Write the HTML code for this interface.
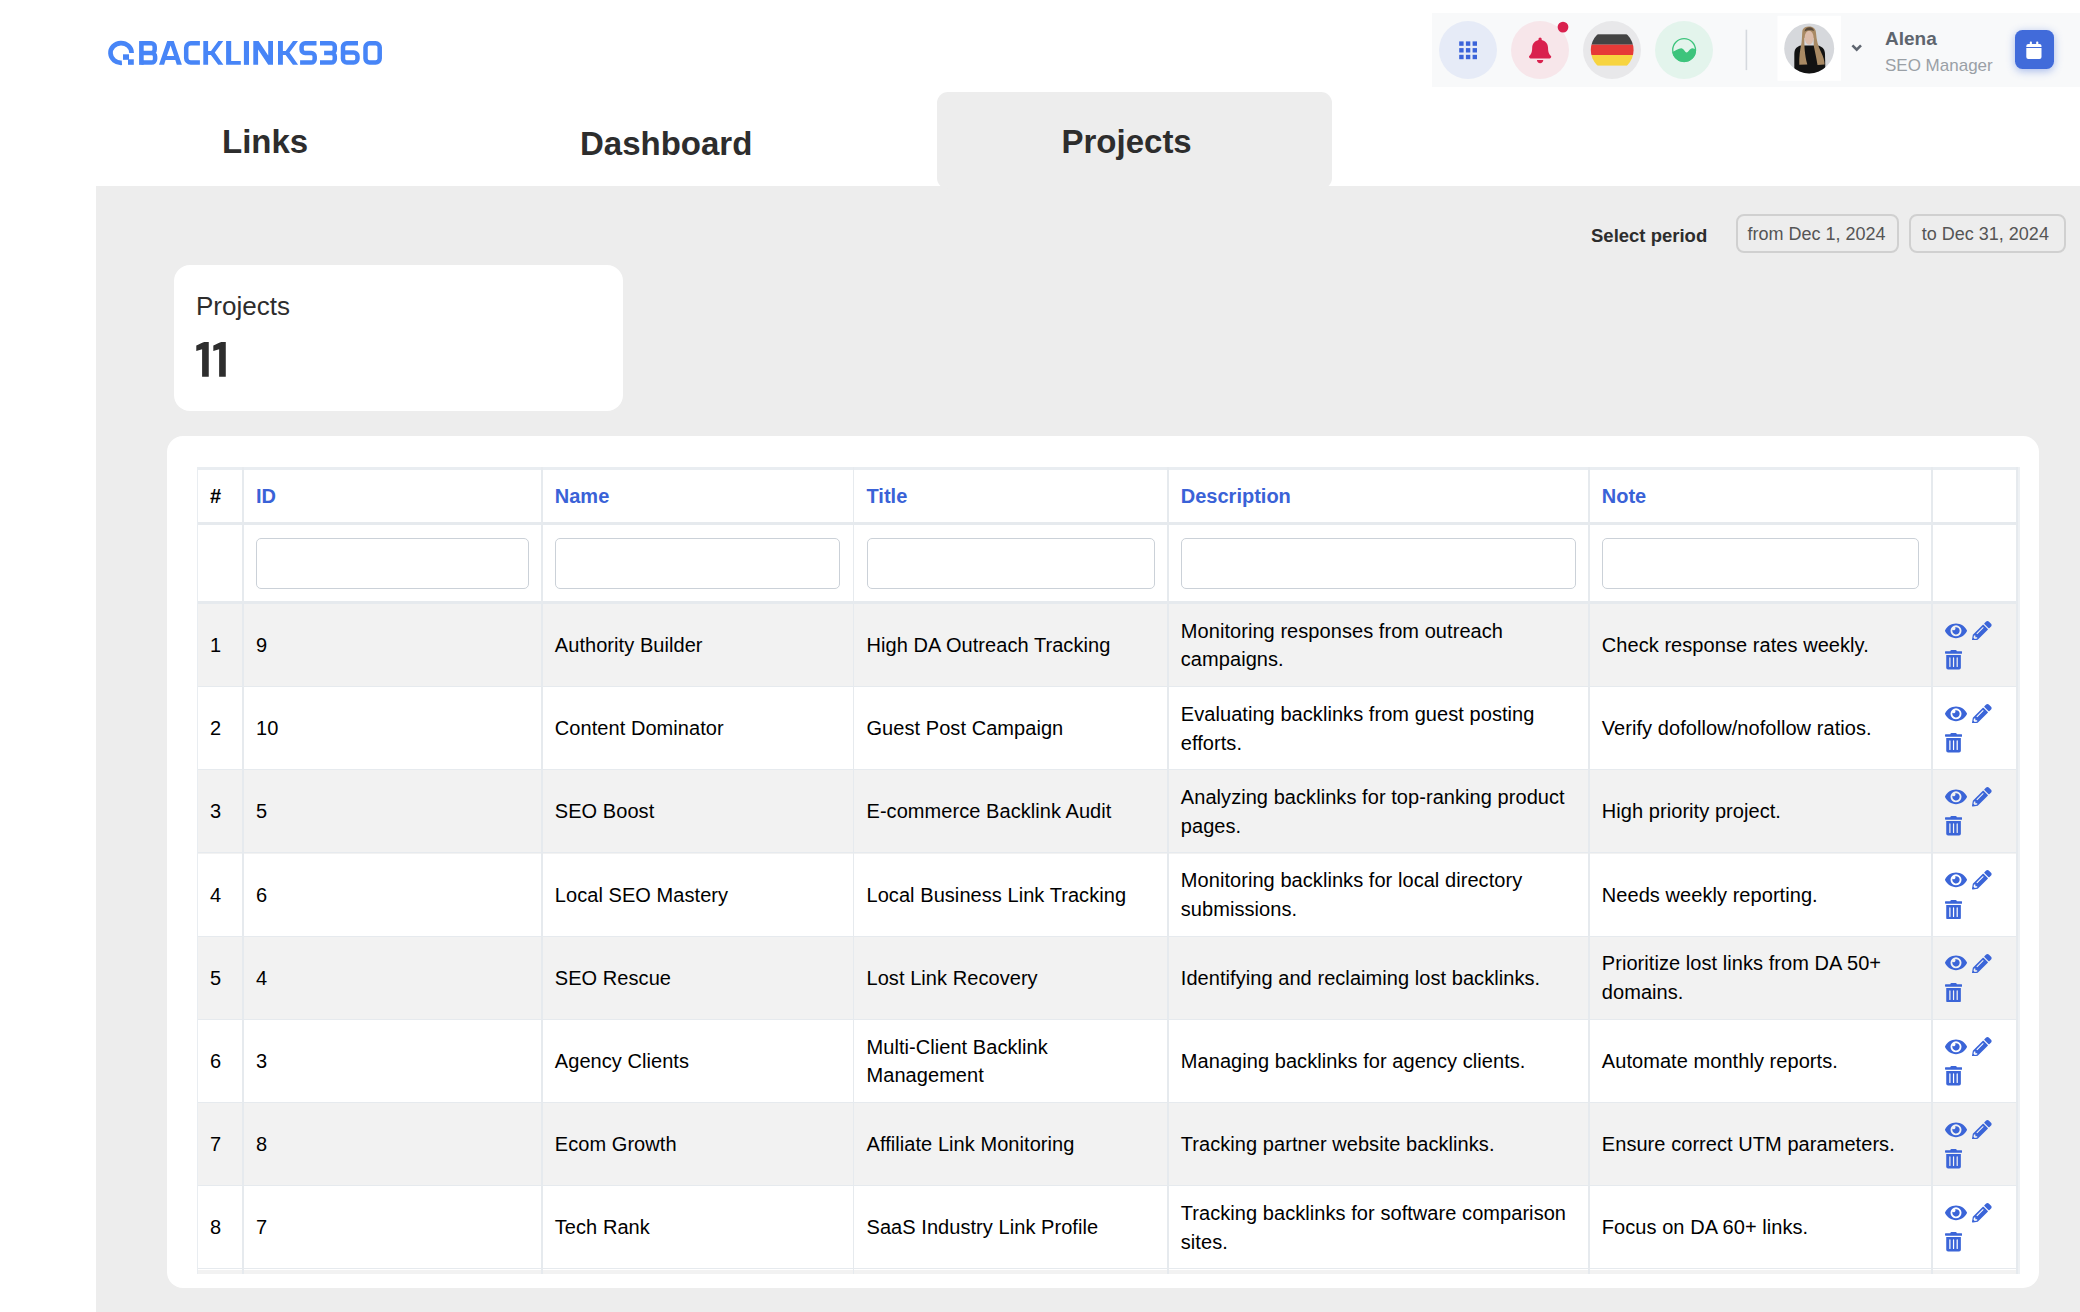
<!DOCTYPE html>
<html><head><meta charset="utf-8">
<style>
*{box-sizing:border-box;margin:0;padding:0}
html,body{width:2080px;height:1312px;overflow:hidden;background:#fff;font-family:"Liberation Sans",sans-serif;color:#000}
.abs{position:absolute}
.t{position:absolute;white-space:nowrap;line-height:1}
#toolbar{left:1432px;top:13px;width:648px;height:74px;background:#f8f9fa}
.circ{position:absolute;top:21px;width:58px;height:58px;border-radius:50%}
#panel{left:96px;top:186px;width:1984px;height:1126px;background:#ededed}
#tabp{left:937px;top:91.5px;width:395px;height:97.5px;background:#ededed;border-radius:11px}
.tab{font-weight:bold;font-size:33px;color:#2d2d2d}
.datebox{position:absolute;top:214px;height:39px;border:2px solid #d0d0d0;border-radius:8px}
.card{position:absolute;background:#fff;border-radius:16px}
</style></head><body>

<!-- logo -->
<svg class="abs" style="left:0;top:0" width="400" height="90" viewBox="0 0 400 90">
<g fill="none" stroke="#4785f7" stroke-width="4.5" stroke-linecap="butt" stroke-linejoin="miter">
<path stroke-width="4.7" d="M131.6,52.9 A10.55,9.85 0 1 0 121.9,62.75"/>
<path d="M199.9,43.3 H190.7 A4.5,4.5 0 0 0 186.2,47.8 V58.1 A4.5,4.5 0 0 0 190.7,62.6 H199.9"/>
<path d="M141.4,43.3 H151.2 A3.5,3.5 0 0 1 154.7,46.8 V49.5 A3.5,3.5 0 0 1 151.2,53 H141.4 M141.4,53 H151.6 A3.5,3.5 0 0 1 155.1,56.5 V59.1 A3.5,3.5 0 0 1 151.6,62.6 H141.4"/>
<path d="M316.5,43.3 H305.1 A3.5,3.5 0 0 0 301.6,46.8 V49.5 A3.5,3.5 0 0 0 305.1,53 H311.2 A3.5,3.5 0 0 1 314.7,56.5 V59.1 A3.5,3.5 0 0 1 311.2,62.6 H300.1"/>
<path d="M320,43.3 H331.3 A3.5,3.5 0 0 1 334.8,46.8 V49.5 A3.5,3.5 0 0 1 331.3,53 H324.1 M331.3,53 A3.5,3.5 0 0 1 334.8,56.5 V59.1 A3.5,3.5 0 0 1 331.3,62.6 H320"/>
<path d="M358,43.3 H346.8 A3.8,3.8 0 0 0 343,47.1 V58.8 A3.8,3.8 0 0 0 346.8,62.6 H353.7 A3.8,3.8 0 0 0 357.5,58.8 V56.2 A3.8,3.8 0 0 0 353.7,52.4 H343"/>
<path d="M369.5,43.3 H375.7 A4,4 0 0 1 379.7,47.3 V58.6 A4,4 0 0 1 375.7,62.6 H369.5 A4,4 0 0 1 365.5,58.6 V47.3 A4,4 0 0 1 369.5,43.3 Z"/>
</g>
<g fill="#4785f7">
<rect x="123" y="54.3" width="6" height="5.5"/><rect x="128" y="59.3" width="5.8" height="5.5"/>
<rect x="139.1" y="41.05" width="4.6" height="23.8"/>
<path fill-rule="evenodd" d="M159,64.85 L167.2,41.05 L173.7,41.05 L181.9,64.85 L176.8,64.85 L175.3,60 L165.6,60 L164.1,64.85 Z M170.6,45.6 L166.9,56 L174.1,56 Z"/>
<path d="M203.3,41.05 H208.1 V51 H211 L218.3,41.05 H223.3 L214.8,52.6 L223.4,64.85 H218.2 L210.9,55 H208.1 V64.85 H203.3 Z"/>
<path d="M226.1,41.05 H231.2 V61 H240.8 V64.85 H226.1 Z"/>
<rect x="243.9" y="41.05" width="5.1" height="23.8"/>
<path d="M253.3,41.05 H258.6 L268.2,55.5 V41.05 H273 V64.85 H268.2 L258.1,49.5 V64.85 H253.3 Z"/>
<path d="M278,41.05 H282.9 V51 H285.7 L293,41.05 H298 L289.5,52.6 L298.1,64.85 H292.9 L285.6,55 H282.9 V64.85 H278 Z"/>
</g>
</svg>
<!-- toolbar -->
<div id="toolbar" class="abs"></div>
<div class="circ" style="left:1439px;background:#e6ebf7"></div>
<div class="circ" style="left:1511px;background:#f7e6ea"></div>
<div class="circ" style="left:1583px;background:#e8e8ea"></div>
<div class="circ" style="left:1655px;background:#e3f4ec"></div>
<svg class="abs" style="left:1420px;top:0" width="660" height="100" viewBox="1420 0 660 100">
<g fill="#3b63d9">
<rect x="1459.2" y="41.4" width="4.4" height="4.4"/><rect x="1465.9" y="41.4" width="4.4" height="4.4"/><rect x="1472.6" y="41.4" width="4.4" height="4.4"/>
<rect x="1459.2" y="48.1" width="4.4" height="4.4"/><rect x="1465.9" y="48.1" width="4.4" height="4.4"/><rect x="1472.6" y="48.1" width="4.4" height="4.4"/>
<rect x="1459.2" y="54.8" width="4.4" height="4.4"/><rect x="1465.9" y="54.8" width="4.4" height="4.4"/><rect x="1472.6" y="54.8" width="4.4" height="4.4"/>
</g>
<g transform="translate(1529,37.4) scale(0.0496,0.0507)"><path fill="#d9214e" d="M224 512c35.32 0 63.97-28.65 63.97-64H160.03c0 35.35 28.65 64 63.97 64zm215.39-149.71c-19.32-20.760-55.47-51.990-55.47-154.290 0-77.700-54.480-139.900-127.940-155.160V32c0-17.670-14.320-32-31.980-32s-31.980 14.330-31.980 32v20.840C118.560 68.100 64.080 130.300 64.080 208c0 102.300-36.150 133.530-55.470 154.290-6 6.450-8.660 14.160-8.610 21.710.11 16.400 12.980 32 32.100 32h383.800c19.120 0 32-15.600 32.100-32 .05-7.550-2.610-15.270-8.610-21.710z"/></g>
<circle cx="1563" cy="27.1" r="5.4" fill="#d9214e"/>
<defs><clipPath id="fc"><circle cx="1612.2" cy="50" r="21.4"/></clipPath></defs>
<g clip-path="url(#fc)">
<rect x="1590" y="34.3" width="45" height="10.4" fill="#434343"/>
<rect x="1590" y="44.7" width="45" height="10.3" fill="#e63a37"/>
<rect x="1590" y="55" width="45" height="10.6" fill="#f7d43f"/>
</g>
<defs><clipPath id="gc"><circle cx="1684.1" cy="50.1" r="12"/></clipPath></defs>
<circle cx="1684.1" cy="50.1" r="11.4" fill="none" stroke="#3dc47c" stroke-width="1.3"/>
<path clip-path="url(#gc)" fill="#3dc47c" d="M1670,52.5 C1674,52.5 1678,48.3 1681.2,48.3 C1683.8,48.3 1684.8,52.4 1686.6,52.4 C1688.6,52.4 1689.8,48.3 1692.3,48.3 C1694.5,48.3 1695.5,50 1698,50 V66 H1670 Z"/>
<rect x="1745.6" y="29.7" width="1.6" height="40.4" fill="#d5d9de"/>
<rect x="1777.5" y="15.8" width="63.5" height="65" fill="#fff"/>
<defs><clipPath id="av"><circle cx="1809.2" cy="48.4" r="25"/></clipPath></defs>
<g clip-path="url(#av)">
<rect x="1784" y="23" width="51" height="51" fill="#d6d8dc"/>
<path fill="#121212" d="M1794.3,76 V54 C1794.3,49 1797,46.3 1801,45.6 H1817.5 C1822,46.3 1824.8,49 1825,54 L1825.5,76 Z"/>
<path fill="#a98a64" d="M1809,26.5 C1813.5,26.5 1815.8,29 1816,33 C1816.5,40 1818,46 1821,52 C1823.5,57 1824.5,61 1824.6,64.5 L1817.5,65 C1816.5,58 1815,52 1813.8,46 L1813.6,38 H1804.4 C1804.3,46 1804.5,54 1807.3,64.5 L1799.3,64.8 C1799,57 1800,50 1801.5,43 C1802.2,38 1802,33 1802.5,30 C1803.5,27.5 1806,26.5 1809,26.5 Z"/>
<ellipse cx="1809.1" cy="37.8" rx="4.5" ry="7" fill="#dcbcaa"/>
<path fill="#5a4a3a" d="M1804.5,31.5 C1805,28.5 1807,27.3 1809.5,27.3 C1812,27.3 1813.6,28.6 1814,31 C1812,29.8 1807,29.8 1804.5,31.5 Z"/>
</g>
<polyline points="1852.4,45.3 1856.7,49.6 1861,45.3" fill="none" stroke="#5f6670" stroke-width="2.6"/>
</svg>
<div class="t" style="left:1885px;top:28.6px;font-size:19px;font-weight:bold;color:#5e656e">Alena</div>
<div class="t" style="left:1885px;top:57.2px;font-size:17px;color:#9aa0a6">SEO Manager</div>
<div class="abs" style="left:2014.8px;top:30.4px;width:39px;height:39px;border-radius:7.5px;background:#416bda;box-shadow:0 2px 9px rgba(65,107,218,.45)"></div>
<svg class="abs" style="left:2000px;top:20px" width="60" height="60" viewBox="2000 20 60 60">
<g fill="#fff">
<rect x="2029.8" y="41.6" width="2.1" height="3.5" rx="0.8"/><rect x="2036.2" y="41.6" width="2.1" height="3.5" rx="0.8"/>
<path d="M2026.3,47 V45.9 A2,2 0 0 1 2028.3,43.9 H2039.5 A2,2 0 0 1 2041.5,45.9 V47 Z"/>
<path d="M2026.3,48 H2041.5 V56.9 A2,2 0 0 1 2039.5,58.9 H2028.3 A2,2 0 0 1 2026.3,56.9 Z"/>
</g>
</svg>
<!-- tabs -->
<div id="panel" class="abs"></div>
<div id="tabp" class="abs"></div>
<div class="t tab" style="left:222px;top:125px">Links</div>
<div class="t tab" style="left:580px;top:127px">Dashboard</div>
<div class="t tab" style="left:1061.5px;top:125.4px">Projects</div>

<!-- select period -->
<div class="t" style="left:1591px;top:226.8px;font-size:18.5px;font-weight:bold;color:#2d2d2d">Select period</div>
<div class="datebox" style="left:1736px;width:163px"></div>
<div class="datebox" style="left:1909px;width:157px"></div>
<div class="t" style="left:1747.5px;top:225.3px;font-size:18px;color:#555">from Dec 1, 2024</div>
<div class="t" style="left:1921.8px;top:225.3px;font-size:18px;color:#555">to Dec 31, 2024</div>

<!-- projects card -->
<div class="card" style="left:174px;top:265px;width:449px;height:146px"></div>
<div class="t" style="left:196px;top:292.6px;font-size:26px;color:#2d2d2d">Projects</div>
<svg class="abs" style="left:190px;top:335px" width="45" height="50" viewBox="190 335 45 50"><path fill="#2d2d2d" d="M204.3,342.05 H208.75 V376.7 H202.1 V349.2 L196.3,351 V345.6 C198.5,344.5 201.5,342.9 204.3,342.05 Z M221.33,342.05 H225.78 V376.7 H219.13 V349.2 L213.33,351 V345.6 C215.53,344.5 218.53,342.9 221.33,342.05 Z"/></svg>

<!-- table card -->
<div class="card" style="left:167px;top:436px;width:1872px;height:852px"></div>

<!-- TABLE START -->
<div class="abs" style="left:197px;top:467px;width:1823px;height:807px;overflow:hidden;background:#fff">
<div class="abs" style="left:0;top:137.0px;width:1823px;height:83.2px;background:#f2f2f2"></div>
<div class="abs" style="left:0;top:219.0px;width:1823px;height:1px;background:#e6eaee"></div>
<div class="abs" style="left:0;top:220.2px;width:1823px;height:83.2px;background:#fff"></div>
<div class="abs" style="left:0;top:302.2px;width:1823px;height:1px;background:#e6eaee"></div>
<div class="abs" style="left:0;top:303.4px;width:1823px;height:83.2px;background:#f2f2f2"></div>
<div class="abs" style="left:0;top:385.4px;width:1823px;height:1px;background:#e6eaee"></div>
<div class="abs" style="left:0;top:386.6px;width:1823px;height:83.2px;background:#fff"></div>
<div class="abs" style="left:0;top:468.6px;width:1823px;height:1px;background:#e6eaee"></div>
<div class="abs" style="left:0;top:469.8px;width:1823px;height:83.2px;background:#f2f2f2"></div>
<div class="abs" style="left:0;top:551.8px;width:1823px;height:1px;background:#e6eaee"></div>
<div class="abs" style="left:0;top:553.0px;width:1823px;height:83.2px;background:#fff"></div>
<div class="abs" style="left:0;top:635.0px;width:1823px;height:1px;background:#e6eaee"></div>
<div class="abs" style="left:0;top:636.2px;width:1823px;height:83.2px;background:#f2f2f2"></div>
<div class="abs" style="left:0;top:718.2px;width:1823px;height:1px;background:#e6eaee"></div>
<div class="abs" style="left:0;top:719.4px;width:1823px;height:83.2px;background:#fff"></div>
<div class="abs" style="left:0;top:801.4px;width:1823px;height:1px;background:#e6eaee"></div>
<div class="abs" style="left:0;top:802.6px;width:1823px;height:83.2px;background:#f2f2f2"></div>
<div class="abs" style="left:0;top:0;width:1823px;height:2.7px;background:#e9edf1"></div>
<div class="abs" style="left:0;top:55px;width:1823px;height:3px;background:#e6eaee"></div>
<div class="abs" style="left:0;top:134px;width:1823px;height:3px;background:#e6eaee"></div>
<div class="abs" style="left:0;top:0;width:1.2px;height:807px;background:#e9edf1"></div>
<div class="abs" style="left:45.2px;top:0;width:1.8px;height:807px;background:#e6eaee"></div>
<div class="abs" style="left:344px;top:0;width:1.8px;height:807px;background:#e6eaee"></div>
<div class="abs" style="left:655.7px;top:0;width:1.8px;height:807px;background:#e6eaee"></div>
<div class="abs" style="left:970px;top:0;width:1.8px;height:807px;background:#e6eaee"></div>
<div class="abs" style="left:1391px;top:0;width:1.8px;height:807px;background:#e6eaee"></div>
<div class="abs" style="left:1734.4px;top:0;width:1.8px;height:807px;background:#e6eaee"></div>
<div class="abs" style="left:1819px;top:0;width:1.8px;height:807px;background:#e6eaee"></div>
<div class="abs" style="left:1820.6px;top:0;width:2.4px;height:807px;background:#eef1f4"></div>
<div class="t" style="left:13px;top:19.37px;font-size:20px;font-weight:bold;color:#000">#</div>
<div class="t" style="left:59.0px;top:19.37px;font-size:20px;font-weight:bold;color:#3a62d7">ID</div>
<div class="t" style="left:357.8px;top:19.37px;font-size:20px;font-weight:bold;color:#3a62d7">Name</div>
<div class="t" style="left:669.5px;top:19.37px;font-size:20px;font-weight:bold;color:#3a62d7">Title</div>
<div class="t" style="left:983.8px;top:19.37px;font-size:20px;font-weight:bold;color:#3a62d7">Description</div>
<div class="t" style="left:1404.8px;top:19.37px;font-size:20px;font-weight:bold;color:#3a62d7">Note</div>
<div class="abs" style="left:59.0px;top:70.5px;width:272.7px;height:51.5px;border:1.5px solid #cbd1d8;border-radius:5px;background:#fff"></div>
<div class="abs" style="left:357.8px;top:70.5px;width:285.6px;height:51.5px;border:1.5px solid #cbd1d8;border-radius:5px;background:#fff"></div>
<div class="abs" style="left:669.5px;top:70.5px;width:288.2px;height:51.5px;border:1.5px solid #cbd1d8;border-radius:5px;background:#fff"></div>
<div class="abs" style="left:983.8px;top:70.5px;width:394.9px;height:51.5px;border:1.5px solid #cbd1d8;border-radius:5px;background:#fff"></div>
<div class="abs" style="left:1404.8px;top:70.5px;width:317.3px;height:51.5px;border:1.5px solid #cbd1d8;border-radius:5px;background:#fff"></div>
<div class="t" style="left:13px;top:168.07px;font-size:20px;letter-spacing:0.06px;color:#000">1</div>
<div class="t" style="left:59.0px;top:168.07px;font-size:20px;letter-spacing:0.06px;color:#000">9</div>
<div class="t" style="left:357.8px;top:168.07px;font-size:20px;letter-spacing:0.06px;color:#000">Authority Builder</div>
<div class="t" style="left:669.5px;top:168.07px;font-size:20px;letter-spacing:0.06px;color:#000">High DA Outreach Tracking</div>
<div class="t" style="left:983.8px;top:153.67px;font-size:20px;letter-spacing:0.06px;color:#000">Monitoring responses from outreach</div>
<div class="t" style="left:983.8px;top:182.47px;font-size:20px;letter-spacing:0.06px;color:#000">campaigns.</div>
<div class="t" style="left:1404.8px;top:168.07px;font-size:20px;letter-spacing:0.06px;color:#000">Check response rates weekly.</div>
<svg viewBox="0 0 576 512" width="22" height="19.6" style="position:absolute;left:1748.1px;top:153.65px"><path fill="#3b65d8" d="M572.52 241.4C518.29 135.59 410.93 64 288 64S57.68 135.64 3.48 241.41a32.35 32.35 0 0 0 0 29.19C57.71 376.41 165.07 448 288 448s230.32-71.64 284.52-177.41a32.35 32.35 0 0 0 0-29.19zM288 400a144 144 0 1 1 144-144 143.930 143.930 0 0 1-144 144zm0-240a95.31 95.31 0 0 0-25.31 3.79 47.85 47.85 0 0 1-66.9 66.9A95.78 95.78 0 1 0 288 160z"/></svg>
<svg viewBox="0 0 512 512" width="19.6" height="19.6" style="position:absolute;left:1775.4px;top:153.7px"><path fill="#3b65d8" d="M497.9 142.1l-46.1 46.1c-4.7 4.7-12.3 4.7-17 0l-111-111c-4.7-4.7-4.7-12.3 0-17l46.1-46.1c18.7-18.7 49.1-18.7 67.9 0l60.1 60.1c18.8 18.7 18.8 49.1 0 67.9zM284.2 99.8L21.6 362.4.4 483.9c-2.9 16.4 11.4 30.6 27.8 27.8l121.5-21.3 262.6-262.6c4.7-4.7 4.7-12.3 0-17l-111-111c-4.8-4.7-12.4-4.7-17.1 0zM124.1 339.9c-5.5-5.5-5.5-14.3 0-19.8l154-154c5.5-5.5 14.3-5.5 19.8 0s5.5 14.3 0 19.8l-154 154c-5.5 5.5-14.3 5.5-19.8 0zM88 424h48v36.3l-64.5 11.3-31.1-31.1L51.7 376H88v48z"/></svg>
<svg viewBox="0 0 448 512" width="17.1" height="19.5" style="position:absolute;left:1748.1px;top:183.0px"><path fill="#3b65d8" d="M32 464a48 48 0 0 0 48 48h288a48 48 0 0 0 48-48V128H32zm272-256a16 16 0 0 1 32 0v224a16 16 0 0 1-32 0zm-96 0a16 16 0 0 1 32 0v224a16 16 0 0 1-32 0zm-96 0a16 16 0 0 1 32 0v224a16 16 0 0 1-32 0zM432 32H312l-9.4-18.7A24 24 0 0 0 281.1 0H166.8a23.72 23.72 0 0 0-21.4 13.3L136 32H16A16 16 0 0 0 0 48v32a16 16 0 0 0 16 16h416a16 16 0 0 0 16-16V48a16 16 0 0 0-16-16z"/></svg>
<div class="t" style="left:13px;top:251.27px;font-size:20px;letter-spacing:0.06px;color:#000">2</div>
<div class="t" style="left:59.0px;top:251.27px;font-size:20px;letter-spacing:0.06px;color:#000">10</div>
<div class="t" style="left:357.8px;top:251.27px;font-size:20px;letter-spacing:0.06px;color:#000">Content Dominator</div>
<div class="t" style="left:669.5px;top:251.27px;font-size:20px;letter-spacing:0.06px;color:#000">Guest Post Campaign</div>
<div class="t" style="left:983.8px;top:236.87px;font-size:20px;letter-spacing:0.06px;color:#000">Evaluating backlinks from guest posting</div>
<div class="t" style="left:983.8px;top:265.67px;font-size:20px;letter-spacing:0.06px;color:#000">efforts.</div>
<div class="t" style="left:1404.8px;top:251.27px;font-size:20px;letter-spacing:0.06px;color:#000">Verify dofollow/nofollow ratios.</div>
<svg viewBox="0 0 576 512" width="22" height="19.6" style="position:absolute;left:1748.1px;top:236.85px"><path fill="#3b65d8" d="M572.52 241.4C518.29 135.59 410.93 64 288 64S57.68 135.64 3.48 241.41a32.35 32.35 0 0 0 0 29.19C57.71 376.41 165.07 448 288 448s230.32-71.64 284.52-177.41a32.35 32.35 0 0 0 0-29.19zM288 400a144 144 0 1 1 144-144 143.930 143.930 0 0 1-144 144zm0-240a95.31 95.31 0 0 0-25.31 3.79 47.85 47.85 0 0 1-66.9 66.9A95.78 95.78 0 1 0 288 160z"/></svg>
<svg viewBox="0 0 512 512" width="19.6" height="19.6" style="position:absolute;left:1775.4px;top:236.9px"><path fill="#3b65d8" d="M497.9 142.1l-46.1 46.1c-4.7 4.7-12.3 4.7-17 0l-111-111c-4.7-4.7-4.7-12.3 0-17l46.1-46.1c18.7-18.7 49.1-18.7 67.9 0l60.1 60.1c18.8 18.7 18.8 49.1 0 67.9zM284.2 99.8L21.6 362.4.4 483.9c-2.9 16.4 11.4 30.6 27.8 27.8l121.5-21.3 262.6-262.6c4.7-4.7 4.7-12.3 0-17l-111-111c-4.8-4.7-12.4-4.7-17.1 0zM124.1 339.9c-5.5-5.5-5.5-14.3 0-19.8l154-154c5.5-5.5 14.3-5.5 19.8 0s5.5 14.3 0 19.8l-154 154c-5.5 5.5-14.3 5.5-19.8 0zM88 424h48v36.3l-64.5 11.3-31.1-31.1L51.7 376H88v48z"/></svg>
<svg viewBox="0 0 448 512" width="17.1" height="19.5" style="position:absolute;left:1748.1px;top:266.2px"><path fill="#3b65d8" d="M32 464a48 48 0 0 0 48 48h288a48 48 0 0 0 48-48V128H32zm272-256a16 16 0 0 1 32 0v224a16 16 0 0 1-32 0zm-96 0a16 16 0 0 1 32 0v224a16 16 0 0 1-32 0zm-96 0a16 16 0 0 1 32 0v224a16 16 0 0 1-32 0zM432 32H312l-9.4-18.7A24 24 0 0 0 281.1 0H166.8a23.72 23.72 0 0 0-21.4 13.3L136 32H16A16 16 0 0 0 0 48v32a16 16 0 0 0 16 16h416a16 16 0 0 0 16-16V48a16 16 0 0 0-16-16z"/></svg>
<div class="t" style="left:13px;top:334.47px;font-size:20px;letter-spacing:0.06px;color:#000">3</div>
<div class="t" style="left:59.0px;top:334.47px;font-size:20px;letter-spacing:0.06px;color:#000">5</div>
<div class="t" style="left:357.8px;top:334.47px;font-size:20px;letter-spacing:0.06px;color:#000">SEO Boost</div>
<div class="t" style="left:669.5px;top:334.47px;font-size:20px;letter-spacing:0.06px;color:#000">E-commerce Backlink Audit</div>
<div class="t" style="left:983.8px;top:320.07px;font-size:20px;letter-spacing:0.06px;color:#000">Analyzing backlinks for top-ranking product</div>
<div class="t" style="left:983.8px;top:348.87px;font-size:20px;letter-spacing:0.06px;color:#000">pages.</div>
<div class="t" style="left:1404.8px;top:334.47px;font-size:20px;letter-spacing:0.06px;color:#000">High priority project.</div>
<svg viewBox="0 0 576 512" width="22" height="19.6" style="position:absolute;left:1748.1px;top:320.05px"><path fill="#3b65d8" d="M572.52 241.4C518.29 135.59 410.93 64 288 64S57.68 135.64 3.48 241.41a32.35 32.35 0 0 0 0 29.19C57.71 376.41 165.07 448 288 448s230.32-71.64 284.52-177.41a32.35 32.35 0 0 0 0-29.19zM288 400a144 144 0 1 1 144-144 143.930 143.930 0 0 1-144 144zm0-240a95.31 95.31 0 0 0-25.31 3.79 47.85 47.85 0 0 1-66.9 66.9A95.78 95.78 0 1 0 288 160z"/></svg>
<svg viewBox="0 0 512 512" width="19.6" height="19.6" style="position:absolute;left:1775.4px;top:320.1px"><path fill="#3b65d8" d="M497.9 142.1l-46.1 46.1c-4.7 4.7-12.3 4.7-17 0l-111-111c-4.7-4.7-4.7-12.3 0-17l46.1-46.1c18.7-18.7 49.1-18.7 67.9 0l60.1 60.1c18.8 18.7 18.8 49.1 0 67.9zM284.2 99.8L21.6 362.4.4 483.9c-2.9 16.4 11.4 30.6 27.8 27.8l121.5-21.3 262.6-262.6c4.7-4.7 4.7-12.3 0-17l-111-111c-4.8-4.7-12.4-4.7-17.1 0zM124.1 339.9c-5.5-5.5-5.5-14.3 0-19.8l154-154c5.5-5.5 14.3-5.5 19.8 0s5.5 14.3 0 19.8l-154 154c-5.5 5.5-14.3 5.5-19.8 0zM88 424h48v36.3l-64.5 11.3-31.1-31.1L51.7 376H88v48z"/></svg>
<svg viewBox="0 0 448 512" width="17.1" height="19.5" style="position:absolute;left:1748.1px;top:349.4px"><path fill="#3b65d8" d="M32 464a48 48 0 0 0 48 48h288a48 48 0 0 0 48-48V128H32zm272-256a16 16 0 0 1 32 0v224a16 16 0 0 1-32 0zm-96 0a16 16 0 0 1 32 0v224a16 16 0 0 1-32 0zm-96 0a16 16 0 0 1 32 0v224a16 16 0 0 1-32 0zM432 32H312l-9.4-18.7A24 24 0 0 0 281.1 0H166.8a23.72 23.72 0 0 0-21.4 13.3L136 32H16A16 16 0 0 0 0 48v32a16 16 0 0 0 16 16h416a16 16 0 0 0 16-16V48a16 16 0 0 0-16-16z"/></svg>
<div class="t" style="left:13px;top:417.67px;font-size:20px;letter-spacing:0.06px;color:#000">4</div>
<div class="t" style="left:59.0px;top:417.67px;font-size:20px;letter-spacing:0.06px;color:#000">6</div>
<div class="t" style="left:357.8px;top:417.67px;font-size:20px;letter-spacing:0.06px;color:#000">Local SEO Mastery</div>
<div class="t" style="left:669.5px;top:417.67px;font-size:20px;letter-spacing:0.06px;color:#000">Local Business Link Tracking</div>
<div class="t" style="left:983.8px;top:403.27px;font-size:20px;letter-spacing:0.06px;color:#000">Monitoring backlinks for local directory</div>
<div class="t" style="left:983.8px;top:432.07px;font-size:20px;letter-spacing:0.06px;color:#000">submissions.</div>
<div class="t" style="left:1404.8px;top:417.67px;font-size:20px;letter-spacing:0.06px;color:#000">Needs weekly reporting.</div>
<svg viewBox="0 0 576 512" width="22" height="19.6" style="position:absolute;left:1748.1px;top:403.25px"><path fill="#3b65d8" d="M572.52 241.4C518.29 135.59 410.93 64 288 64S57.68 135.64 3.48 241.41a32.35 32.35 0 0 0 0 29.19C57.71 376.41 165.07 448 288 448s230.32-71.64 284.52-177.41a32.35 32.35 0 0 0 0-29.19zM288 400a144 144 0 1 1 144-144 143.930 143.930 0 0 1-144 144zm0-240a95.31 95.31 0 0 0-25.31 3.79 47.85 47.85 0 0 1-66.9 66.9A95.78 95.78 0 1 0 288 160z"/></svg>
<svg viewBox="0 0 512 512" width="19.6" height="19.6" style="position:absolute;left:1775.4px;top:403.3px"><path fill="#3b65d8" d="M497.9 142.1l-46.1 46.1c-4.7 4.7-12.3 4.7-17 0l-111-111c-4.7-4.7-4.7-12.3 0-17l46.1-46.1c18.7-18.7 49.1-18.7 67.9 0l60.1 60.1c18.8 18.7 18.8 49.1 0 67.9zM284.2 99.8L21.6 362.4.4 483.9c-2.9 16.4 11.4 30.6 27.8 27.8l121.5-21.3 262.6-262.6c4.7-4.7 4.7-12.3 0-17l-111-111c-4.8-4.7-12.4-4.7-17.1 0zM124.1 339.9c-5.5-5.5-5.5-14.3 0-19.8l154-154c5.5-5.5 14.3-5.5 19.8 0s5.5 14.3 0 19.8l-154 154c-5.5 5.5-14.3 5.5-19.8 0zM88 424h48v36.3l-64.5 11.3-31.1-31.1L51.7 376H88v48z"/></svg>
<svg viewBox="0 0 448 512" width="17.1" height="19.5" style="position:absolute;left:1748.1px;top:432.6px"><path fill="#3b65d8" d="M32 464a48 48 0 0 0 48 48h288a48 48 0 0 0 48-48V128H32zm272-256a16 16 0 0 1 32 0v224a16 16 0 0 1-32 0zm-96 0a16 16 0 0 1 32 0v224a16 16 0 0 1-32 0zm-96 0a16 16 0 0 1 32 0v224a16 16 0 0 1-32 0zM432 32H312l-9.4-18.7A24 24 0 0 0 281.1 0H166.8a23.72 23.72 0 0 0-21.4 13.3L136 32H16A16 16 0 0 0 0 48v32a16 16 0 0 0 16 16h416a16 16 0 0 0 16-16V48a16 16 0 0 0-16-16z"/></svg>
<div class="t" style="left:13px;top:500.87px;font-size:20px;letter-spacing:0.06px;color:#000">5</div>
<div class="t" style="left:59.0px;top:500.87px;font-size:20px;letter-spacing:0.06px;color:#000">4</div>
<div class="t" style="left:357.8px;top:500.87px;font-size:20px;letter-spacing:0.06px;color:#000">SEO Rescue</div>
<div class="t" style="left:669.5px;top:500.87px;font-size:20px;letter-spacing:0.06px;color:#000">Lost Link Recovery</div>
<div class="t" style="left:983.8px;top:500.87px;font-size:20px;letter-spacing:0.06px;color:#000">Identifying and reclaiming lost backlinks.</div>
<div class="t" style="left:1404.8px;top:486.47px;font-size:20px;letter-spacing:0.06px;color:#000">Prioritize lost links from DA 50+</div>
<div class="t" style="left:1404.8px;top:515.27px;font-size:20px;letter-spacing:0.06px;color:#000">domains.</div>
<svg viewBox="0 0 576 512" width="22" height="19.6" style="position:absolute;left:1748.1px;top:486.45px"><path fill="#3b65d8" d="M572.52 241.4C518.29 135.59 410.93 64 288 64S57.68 135.64 3.48 241.41a32.35 32.35 0 0 0 0 29.19C57.71 376.41 165.07 448 288 448s230.32-71.64 284.52-177.41a32.35 32.35 0 0 0 0-29.19zM288 400a144 144 0 1 1 144-144 143.930 143.930 0 0 1-144 144zm0-240a95.31 95.31 0 0 0-25.31 3.79 47.85 47.85 0 0 1-66.9 66.9A95.78 95.78 0 1 0 288 160z"/></svg>
<svg viewBox="0 0 512 512" width="19.6" height="19.6" style="position:absolute;left:1775.4px;top:486.5px"><path fill="#3b65d8" d="M497.9 142.1l-46.1 46.1c-4.7 4.7-12.3 4.7-17 0l-111-111c-4.7-4.7-4.7-12.3 0-17l46.1-46.1c18.7-18.7 49.1-18.7 67.9 0l60.1 60.1c18.8 18.7 18.8 49.1 0 67.9zM284.2 99.8L21.6 362.4.4 483.9c-2.9 16.4 11.4 30.6 27.8 27.8l121.5-21.3 262.6-262.6c4.7-4.7 4.7-12.3 0-17l-111-111c-4.8-4.7-12.4-4.7-17.1 0zM124.1 339.9c-5.5-5.5-5.5-14.3 0-19.8l154-154c5.5-5.5 14.3-5.5 19.8 0s5.5 14.3 0 19.8l-154 154c-5.5 5.5-14.3 5.5-19.8 0zM88 424h48v36.3l-64.5 11.3-31.1-31.1L51.7 376H88v48z"/></svg>
<svg viewBox="0 0 448 512" width="17.1" height="19.5" style="position:absolute;left:1748.1px;top:515.8px"><path fill="#3b65d8" d="M32 464a48 48 0 0 0 48 48h288a48 48 0 0 0 48-48V128H32zm272-256a16 16 0 0 1 32 0v224a16 16 0 0 1-32 0zm-96 0a16 16 0 0 1 32 0v224a16 16 0 0 1-32 0zm-96 0a16 16 0 0 1 32 0v224a16 16 0 0 1-32 0zM432 32H312l-9.4-18.7A24 24 0 0 0 281.1 0H166.8a23.72 23.72 0 0 0-21.4 13.3L136 32H16A16 16 0 0 0 0 48v32a16 16 0 0 0 16 16h416a16 16 0 0 0 16-16V48a16 16 0 0 0-16-16z"/></svg>
<div class="t" style="left:13px;top:584.07px;font-size:20px;letter-spacing:0.06px;color:#000">6</div>
<div class="t" style="left:59.0px;top:584.07px;font-size:20px;letter-spacing:0.06px;color:#000">3</div>
<div class="t" style="left:357.8px;top:584.07px;font-size:20px;letter-spacing:0.06px;color:#000">Agency Clients</div>
<div class="t" style="left:669.5px;top:569.67px;font-size:20px;letter-spacing:0.06px;color:#000">Multi-Client Backlink</div>
<div class="t" style="left:669.5px;top:598.47px;font-size:20px;letter-spacing:0.06px;color:#000">Management</div>
<div class="t" style="left:983.8px;top:584.07px;font-size:20px;letter-spacing:0.06px;color:#000">Managing backlinks for agency clients.</div>
<div class="t" style="left:1404.8px;top:584.07px;font-size:20px;letter-spacing:0.06px;color:#000">Automate monthly reports.</div>
<svg viewBox="0 0 576 512" width="22" height="19.6" style="position:absolute;left:1748.1px;top:569.65px"><path fill="#3b65d8" d="M572.52 241.4C518.29 135.59 410.93 64 288 64S57.68 135.64 3.48 241.41a32.35 32.35 0 0 0 0 29.19C57.71 376.41 165.07 448 288 448s230.32-71.64 284.52-177.41a32.35 32.35 0 0 0 0-29.19zM288 400a144 144 0 1 1 144-144 143.930 143.930 0 0 1-144 144zm0-240a95.31 95.31 0 0 0-25.31 3.79 47.85 47.85 0 0 1-66.9 66.9A95.78 95.78 0 1 0 288 160z"/></svg>
<svg viewBox="0 0 512 512" width="19.6" height="19.6" style="position:absolute;left:1775.4px;top:569.7px"><path fill="#3b65d8" d="M497.9 142.1l-46.1 46.1c-4.7 4.7-12.3 4.7-17 0l-111-111c-4.7-4.7-4.7-12.3 0-17l46.1-46.1c18.7-18.7 49.1-18.7 67.9 0l60.1 60.1c18.8 18.7 18.8 49.1 0 67.9zM284.2 99.8L21.6 362.4.4 483.9c-2.9 16.4 11.4 30.6 27.8 27.8l121.5-21.3 262.6-262.6c4.7-4.7 4.7-12.3 0-17l-111-111c-4.8-4.7-12.4-4.7-17.1 0zM124.1 339.9c-5.5-5.5-5.5-14.3 0-19.8l154-154c5.5-5.5 14.3-5.5 19.8 0s5.5 14.3 0 19.8l-154 154c-5.5 5.5-14.3 5.5-19.8 0zM88 424h48v36.3l-64.5 11.3-31.1-31.1L51.7 376H88v48z"/></svg>
<svg viewBox="0 0 448 512" width="17.1" height="19.5" style="position:absolute;left:1748.1px;top:599.0px"><path fill="#3b65d8" d="M32 464a48 48 0 0 0 48 48h288a48 48 0 0 0 48-48V128H32zm272-256a16 16 0 0 1 32 0v224a16 16 0 0 1-32 0zm-96 0a16 16 0 0 1 32 0v224a16 16 0 0 1-32 0zm-96 0a16 16 0 0 1 32 0v224a16 16 0 0 1-32 0zM432 32H312l-9.4-18.7A24 24 0 0 0 281.1 0H166.8a23.72 23.72 0 0 0-21.4 13.3L136 32H16A16 16 0 0 0 0 48v32a16 16 0 0 0 16 16h416a16 16 0 0 0 16-16V48a16 16 0 0 0-16-16z"/></svg>
<div class="t" style="left:13px;top:667.27px;font-size:20px;letter-spacing:0.06px;color:#000">7</div>
<div class="t" style="left:59.0px;top:667.27px;font-size:20px;letter-spacing:0.06px;color:#000">8</div>
<div class="t" style="left:357.8px;top:667.27px;font-size:20px;letter-spacing:0.06px;color:#000">Ecom Growth</div>
<div class="t" style="left:669.5px;top:667.27px;font-size:20px;letter-spacing:0.06px;color:#000">Affiliate Link Monitoring</div>
<div class="t" style="left:983.8px;top:667.27px;font-size:20px;letter-spacing:0.06px;color:#000">Tracking partner website backlinks.</div>
<div class="t" style="left:1404.8px;top:667.27px;font-size:20px;letter-spacing:0.06px;color:#000">Ensure correct UTM parameters.</div>
<svg viewBox="0 0 576 512" width="22" height="19.6" style="position:absolute;left:1748.1px;top:652.85px"><path fill="#3b65d8" d="M572.52 241.4C518.29 135.59 410.93 64 288 64S57.68 135.64 3.48 241.41a32.35 32.35 0 0 0 0 29.19C57.71 376.41 165.07 448 288 448s230.32-71.64 284.52-177.41a32.35 32.35 0 0 0 0-29.19zM288 400a144 144 0 1 1 144-144 143.930 143.930 0 0 1-144 144zm0-240a95.31 95.31 0 0 0-25.31 3.79 47.85 47.85 0 0 1-66.9 66.9A95.78 95.78 0 1 0 288 160z"/></svg>
<svg viewBox="0 0 512 512" width="19.6" height="19.6" style="position:absolute;left:1775.4px;top:652.9px"><path fill="#3b65d8" d="M497.9 142.1l-46.1 46.1c-4.7 4.7-12.3 4.7-17 0l-111-111c-4.7-4.7-4.7-12.3 0-17l46.1-46.1c18.7-18.7 49.1-18.7 67.9 0l60.1 60.1c18.8 18.7 18.8 49.1 0 67.9zM284.2 99.8L21.6 362.4.4 483.9c-2.9 16.4 11.4 30.6 27.8 27.8l121.5-21.3 262.6-262.6c4.7-4.7 4.7-12.3 0-17l-111-111c-4.8-4.7-12.4-4.7-17.1 0zM124.1 339.9c-5.5-5.5-5.5-14.3 0-19.8l154-154c5.5-5.5 14.3-5.5 19.8 0s5.5 14.3 0 19.8l-154 154c-5.5 5.5-14.3 5.5-19.8 0zM88 424h48v36.3l-64.5 11.3-31.1-31.1L51.7 376H88v48z"/></svg>
<svg viewBox="0 0 448 512" width="17.1" height="19.5" style="position:absolute;left:1748.1px;top:682.2px"><path fill="#3b65d8" d="M32 464a48 48 0 0 0 48 48h288a48 48 0 0 0 48-48V128H32zm272-256a16 16 0 0 1 32 0v224a16 16 0 0 1-32 0zm-96 0a16 16 0 0 1 32 0v224a16 16 0 0 1-32 0zm-96 0a16 16 0 0 1 32 0v224a16 16 0 0 1-32 0zM432 32H312l-9.4-18.7A24 24 0 0 0 281.1 0H166.8a23.72 23.72 0 0 0-21.4 13.3L136 32H16A16 16 0 0 0 0 48v32a16 16 0 0 0 16 16h416a16 16 0 0 0 16-16V48a16 16 0 0 0-16-16z"/></svg>
<div class="t" style="left:13px;top:750.47px;font-size:20px;letter-spacing:0.06px;color:#000">8</div>
<div class="t" style="left:59.0px;top:750.47px;font-size:20px;letter-spacing:0.06px;color:#000">7</div>
<div class="t" style="left:357.8px;top:750.47px;font-size:20px;letter-spacing:0.06px;color:#000">Tech Rank</div>
<div class="t" style="left:669.5px;top:750.47px;font-size:20px;letter-spacing:0.06px;color:#000">SaaS Industry Link Profile</div>
<div class="t" style="left:983.8px;top:736.07px;font-size:20px;letter-spacing:0.06px;color:#000">Tracking backlinks for software comparison</div>
<div class="t" style="left:983.8px;top:764.87px;font-size:20px;letter-spacing:0.06px;color:#000">sites.</div>
<div class="t" style="left:1404.8px;top:750.47px;font-size:20px;letter-spacing:0.06px;color:#000">Focus on DA 60+ links.</div>
<svg viewBox="0 0 576 512" width="22" height="19.6" style="position:absolute;left:1748.1px;top:736.05px"><path fill="#3b65d8" d="M572.52 241.4C518.29 135.59 410.93 64 288 64S57.68 135.64 3.48 241.41a32.35 32.35 0 0 0 0 29.19C57.71 376.41 165.07 448 288 448s230.32-71.64 284.52-177.41a32.35 32.35 0 0 0 0-29.19zM288 400a144 144 0 1 1 144-144 143.930 143.930 0 0 1-144 144zm0-240a95.31 95.31 0 0 0-25.31 3.79 47.85 47.85 0 0 1-66.9 66.9A95.78 95.78 0 1 0 288 160z"/></svg>
<svg viewBox="0 0 512 512" width="19.6" height="19.6" style="position:absolute;left:1775.4px;top:736.1px"><path fill="#3b65d8" d="M497.9 142.1l-46.1 46.1c-4.7 4.7-12.3 4.7-17 0l-111-111c-4.7-4.7-4.7-12.3 0-17l46.1-46.1c18.7-18.7 49.1-18.7 67.9 0l60.1 60.1c18.8 18.7 18.8 49.1 0 67.9zM284.2 99.8L21.6 362.4.4 483.9c-2.9 16.4 11.4 30.6 27.8 27.8l121.5-21.3 262.6-262.6c4.7-4.7 4.7-12.3 0-17l-111-111c-4.8-4.7-12.4-4.7-17.1 0zM124.1 339.9c-5.5-5.5-5.5-14.3 0-19.8l154-154c5.5-5.5 14.3-5.5 19.8 0s5.5 14.3 0 19.8l-154 154c-5.5 5.5-14.3 5.5-19.8 0zM88 424h48v36.3l-64.5 11.3-31.1-31.1L51.7 376H88v48z"/></svg>
<svg viewBox="0 0 448 512" width="17.1" height="19.5" style="position:absolute;left:1748.1px;top:765.4px"><path fill="#3b65d8" d="M32 464a48 48 0 0 0 48 48h288a48 48 0 0 0 48-48V128H32zm272-256a16 16 0 0 1 32 0v224a16 16 0 0 1-32 0zm-96 0a16 16 0 0 1 32 0v224a16 16 0 0 1-32 0zm-96 0a16 16 0 0 1 32 0v224a16 16 0 0 1-32 0zM432 32H312l-9.4-18.7A24 24 0 0 0 281.1 0H166.8a23.72 23.72 0 0 0-21.4 13.3L136 32H16A16 16 0 0 0 0 48v32a16 16 0 0 0 16 16h416a16 16 0 0 0 16-16V48a16 16 0 0 0-16-16z"/></svg>
</div>
<!-- TABLE END -->
</body></html>
